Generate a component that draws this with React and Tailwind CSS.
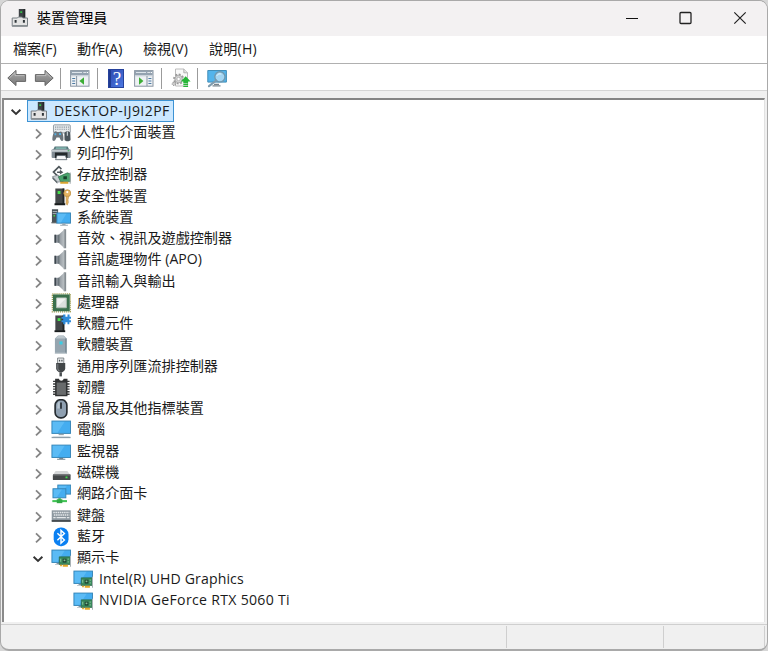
import React from 'react';

const Arrow = ({ flip }) => (
  <svg width="20" height="18" viewBox="0 0 20 18" className={flip ? '-scale-x-100' : ''}>
    <defs>
      <linearGradient id="arrow" x1="0" y1="0" x2="0" y2="1">
        <stop offset="0" stopColor="#aaa" />
        <stop offset="1" stopColor="#777" />
      </linearGradient>
    </defs>
    <path d="M.8 9 9 1.4V5.6h9.6v6.8H9v4.2z" fill="url(#arrow)" stroke="#666" strokeWidth="1" strokeLinejoin="round" />
    <path d="M2.6 8.8 8 3.7v2.9h9.4" fill="none" stroke="#c4c4c4" strokeWidth=".8" />
  </svg>
);

const PanelIcon = ({ right }) => (
  <svg width="20" height="17" viewBox="0 0 20 17">
    <rect x=".6" y=".6" width="18.4" height="15.6" fill="#eef1f4" stroke="#8995a2" />
    <rect x="1" y="1" width="17.6" height="4.2" fill="#94a2b0" />
    <path d="M2 2.5h10" stroke="#dde4ea" strokeWidth="1" />
    <path d="M13.5 2.5h1.2M15.3 2.5h1M17 2.5h1" stroke="#fff" strokeWidth="1.2" />
    <path d="M1 5.8h17.6" stroke="#c3ccd5" strokeWidth="1" />
    {right ? (
      <>
        <path d="M13 6v10" stroke="#8995a2" />
        <path d="M14.4 8.5h3M14.4 11h3M14.4 13.5h3" stroke="#4d7ba3" strokeWidth="1.2" />
        <path d="M5 7.2v7.6L9.4 11z" fill="#3cae35" />
      </>
    ) : (
      <>
        <path d="M6.6 6v10" stroke="#8995a2" />
        <path d="M2.2 8.5h3M2.2 11h3M2.2 13.5h3" stroke="#4d7ba3" strokeWidth="1.2" />
        <path d="M14 7.2v7.6L9.4 11z" fill="#3cae35" />
      </>
    )}
  </svg>
);

const HelpIcon = () => (
  <span className="relative flex h-[19px] w-4 items-center justify-center border border-[#26429c] bg-linear-to-br from-[#2c48ae] to-[#4d78e2] pl-[2px] font-['Liberation_Serif',serif] text-[19px] leading-none text-white">
    <span className="absolute inset-y-0 left-0 w-[2px] bg-[#203a91]" />?
  </span>
);

const ScanIcon = () => (
  <svg width="20" height="20" viewBox="0 0 20 20">
    <path d="M4.5 1h8.3L16.5 4.6V18H4.5z" fill="#fafafa" stroke="#bcbcbc" />
    <path d="M12.8 1v3.8h3.7" fill="#e4e4e4" stroke="#a5a5a5" strokeWidth=".8" />
    <circle cx="7.6" cy="11" r="4.4" fill="#dedede" stroke="#999" strokeWidth="2.2" strokeDasharray="1.8 1.6" />
    <circle cx="7.6" cy="11" r="3.7" fill="#d6d6d6" stroke="#a2a2a2" strokeWidth=".8" />
    <circle cx="7.6" cy="11" r="1.7" fill="#fff" stroke="#999" strokeWidth=".6" />
    <circle cx="2.9" cy="15.8" r="1.7" fill="#ccc" stroke="#999" strokeWidth="1.1" strokeDasharray="1.1 .9" />
    <path d="M14.7 8.3l4.9 5.1h-2.5v2h-4.8v-2H9.8zM12.3 16h4.8v1.1h-4.8zM12.3 17.8h4.8V19h-4.8z" fill="#25b637" />
  </svg>
);

const MonitorScanIcon = () => (
  <svg width="21" height="19" viewBox="0 0 21 19">
    <path d="M.8 1.5h18.6v11.6H.8z" fill="#53b4eb" stroke="#428eb8" />
    <path d="M7 15.3h5M5.5 16.8h8" stroke="#77848c" strokeWidth="1.2" />
    <circle cx="12.9" cy="7.8" r="5.1" fill="#a3d5f2" stroke="#7098af" strokeWidth="1.4" />
    <path d="M9.8 6.8c1-2 3-2.4 4.5-1.6" stroke="#e6f5fc" fill="none" />
    <path d="M9.2 11.5 2 17.2" stroke="#7f9cae" strokeWidth="2.2" strokeLinecap="round" />
  </svg>
);

// small server on top of a device box, used in the title and on the root node
const PcIcon = () => (
  <svg width="18" height="20" viewBox="0 0 18 20">
    <path d="M7.8 1h6.4v10H7.8z" fill="#3d4245" />
    <path d="M12.5 1h1.7v10h-1.7z" fill="#24282a" />
    <path d="M9.3 3.3h1.8v1.6H9.3z" fill="#35c449" />
    <path d="M1.2 10h5.2l1-1h3.4l1 1h4.7v8.2H1.2z" fill="#e4e4e4" stroke="#777f84" strokeWidth="1" />
    <path d="M1.2 17h15.3v1.4H1.2z" fill="#8a9094" />
    <path d="M3.6 12h2v2.7h-2zM11.9 12h2v2.7h-2z" fill="#30363a" />
  </svg>
);

const Screen = ({ x, y, w, h }) => (
  <>
    <rect x={x} y={y} width={w} height={h} fill="#44adf0" stroke="#3584b5" strokeWidth=".9" />
    <path d={`M${x + 0.7} ${y + 0.7}h${w * 0.65}L${x + w * 0.3} ${y + h - 0.7}H${x + 0.7}z`} fill="#78cbfa" opacity=".45" />
  </>
);

const ServerBody = () => (
  <>
    <path d="M4.8 1.6h8.7v15H4.8z" fill="#434749" />
    <path d="M11.8 1.6h1.7v15h-1.7z" fill="#222627" />
    <path d="M4 16h10.4v1.8H4z" fill="#191c1d" />
    <path d="M7 4.2h2.8V7H7z" fill="#46df4b" />
  </>
);

const Board = () => (
  <>
    <path d="M8.6 8.8h10.8v7.4H8.6z" fill="#3b8a5c" stroke="#225f3e" strokeWidth=".6" />
    <path d="M12 10.6h3.5v3.6H12z" fill="#173a2b" />
    <path d="M12.8 11.4h1.8V13h-1.8zM9.5 10.6h1v3h-1zM16.7 10.5h1.2v1.2h-1.2zM16.7 13h1.2v1.2h-1.2z" fill="#83c297" />
    <path d="M9.4 16.4h1.8v1.6H9.4zM12 16.4h5v1.9h-5z" fill="#e5a928" />
    <path d="M19.5 7.8v10.5" stroke="#a9b2b5" strokeWidth="1" />
  </>
);

const glyphs = {
  hid: (
    <>
      <rect x="3" y="2" width="16.3" height="7.8" rx=".8" fill="#e7eaec" stroke="#8d979f" strokeWidth=".9" />
      <path d="M4.5 4.2h13.5M4.5 6.3h13.5" stroke="#8d979f" strokeWidth="1.1" strokeDasharray="1.2 .9" />
      <path d="M3.6 9c1-1 2.3-.8 3 0h2c.9-.8 2.2-.8 2.8.2 1 2.2 1.5 5.1 1.2 7.1-.4 1.9-2 1.9-2.8.1l-1-2.2H6l-1.2 2.4c-.8 1.5-2.7 1.5-2.9-.3-.1-2.1.6-5.1 1.7-7.3z" fill="#6c757c" />
      <path d="M4 10.2h1.7v2H4zM8.4 9.8h1.9v2H8.4z" fill="#57b0e0" />
      <path d="M13.6 9.8c1.2-2.2 5-2.2 5.7 0l.3 6.6c-.4 1.9-5.4 1.9-5.9 0z" fill="#4b555c" />
      <path d="M16.5 8.4v4.2" stroke="#c2cace" strokeWidth="1.2" />
    </>
  ),
  printer: (
    <>
      <path d="M4.2 2.6h12.6l1.6 3.3H2.6z" fill="#55767a" />
      <path d="M5.4 3.4h10.2v1.8H5z" fill="#7fb0ab" />
      <rect x="1.2" y="5.2" width="18.5" height="8.6" rx="1.1" fill="#808c94" />
      <path d="M1.5 5.8h17.9v2H1.5z" fill="#c3cbd0" />
      <path d="M16.8 6.2h1.6v1.1h-1.6z" fill="#3aa853" />
      <path d="M4.4 8.4h12.2v5.4H4.4z" fill="#22282b" />
      <path d="M6.4 11.4h8.2l1.4 4H5z" fill="#f5f7f8" stroke="#59646b" strokeWidth=".8" />
    </>
  ),
  storage: (
    <>
      <path d="M10.7 4.1 8.3 1.9 3 7.1l5.5 5.2" fill="none" stroke="#4f575b" strokeWidth="1.6" />
      <path d="M6.5 7.2h3.6" stroke="#4f575b" strokeWidth="1.5" />
      <path d="m9.2 4.9 3.4 2.3-3.4 2.3z" fill="#4f575b" />
      <path d="m2 11.5 5.4-1.5 5 6.2-5.6.6z" fill="#c8ced1" stroke="#727b80" strokeWidth=".7" />
      <path d="m2 11.8 4.8 5v1.7L2 13.5z" fill="#505b60" />
      <path d="m7.7 11.6 8.8-3.8 2.7 1v7.5H9.8z" fill="#4aa26c" stroke="#236440" strokeWidth=".6" />
      <path d="M12.6 11.2h3.4v2.8h-3.4z" fill="#17432b" />
      <path d="M9.6 16.5h7.8v1.9H9.6z" fill="#d9a42f" />
      <path d="M19.2 7.5v10.8" stroke="#9fa8ac" />
    </>
  ),
  security: (
    <>
      <ServerBody />
      <circle cx="16.4" cy="6.2" r="3.4" fill="#e5b565" stroke="#b98a3c" strokeWidth=".7" />
      <circle cx="16.4" cy="5.1" r="1.1" fill="#fff" />
      <path d="M15.2 9.2h2.4v2l-.7.8.7.8-.7.9.7.9-1.2 3.2-1.2-1.3z" fill="#e5b565" stroke="#b98a3c" strokeWidth=".5" />
    </>
  ),
  system: (
    <>
      <path d="M1.5 1.3h6v12.6h-6z" fill="#4a5358" />
      <path d="M2.2 3.6h4.5M2.2 5.6h4.5" stroke="#a9b4ba" strokeWidth=".9" />
      <path d="M3 7h1.5v1.4H3z" fill="#45d44b" />
      <path d="M1 14h5.5v1H1z" fill="#2f3639" />
      <Screen x={6.3} y={5} w={13.2} h={9.9} />
      <path d="M11.5 15.2h3.2v1.5h-3.2zM9.5 16.4H17v.9H9.5z" fill="#9aa8b1" />
    </>
  ),
  speaker: (
    <>
      <path d="M4 5.8h5v7.8H4z" fill="#858d94" />
      <path d="M4 5.8h1.5v7.8H4z" fill="#3d464d" />
      <path d="M8 5.8 13.6.6v18.2L8 13.6z" fill="url(#cone)" />
      <path d="M8.2 5.8v7.8" stroke="#5a636a" strokeWidth=".8" />
      <path d="M13 .5h2.3v18.4H13z" fill="#868d92" />
      <path d="M13.2 1v17.5" stroke="#c6cbce" strokeWidth=".6" />
    </>
  ),
  cpu: (
    <>
      <rect x="1.9" y="1" width="17.5" height="17.5" fill="none" stroke="#9b9a4e" strokeWidth="1.2" strokeDasharray="1.1 .9" />
      <path d="M2.5 1.6h16.3v16.3H2.5z" fill="#3a704d" />
      <path d="M6 5h9.5v9.5H6z" fill="#dce0de" stroke="#b2bfb5" strokeWidth=".9" />
      <path d="M6.6 5.6h8.3l-8.3 8.3z" fill="#f0f2f1" />
    </>
  ),
  component: (
    <>
      <ServerBody />
      <path d="M12.4.6h2.2v2.2h2V.6h2v2.2H20v1.9h-1.6v1.6H20v2h-1.6v1.9h-1.8V8.3h-2v1.9h-2.2V8.3h-1.6v-2h1.6V4.7h-1.6V2.8h1.6z" fill="#2f8bd8" />
    </>
  ),
  software: (
    <>
      <path d="M4.4 3.5 7.5.8h5.4l2.9 2.7v14.9H4.4z" fill="#96a5af" />
      <path d="M4.8 3.6 7.5 1.2h5.2l2.7 2.4z" fill="#bcc7cd" />
      <path d="M14.2 3.6h1.6v14.8h-1.6z" fill="#7d8d97" />
      <path d="M8.8 6.4h3v3h-3z" fill="#39cde4" />
      <path d="M4.4 17.4h11.4v1.2H4.4z" fill="#c3ccd1" />
    </>
  ),
  usb: (
    <>
      <path d="M7 1.2h6v5.2H7z" fill="#eceeef" stroke="#6b7276" strokeWidth=".8" />
      <path d="M8.3 2.8h1.2v1.8H8.3zM10.6 2.8h1.2v1.8h-1.2z" fill="#474d50" />
      <path d="M5.6 6h8.8v5.2c0 2-1.6 3.2-2.8 3.8H8.4c-1.2-.6-2.8-1.8-2.8-3.8z" fill="#424648" />
      <path d="M7.2 7v4.7c.2 1 1 1.7 1.6 2.1" stroke="#787e81" fill="none" />
      <path d="M10 15v4" stroke="#484d50" strokeWidth="2.4" />
    </>
  ),
  firmware: (
    <>
      <path d="M2.6 3.5h3M2.6 6h3M2.6 8.5h3M2.6 11h3M2.6 13.5h3M2.6 16h3M15 3.5h3.6M15 6h3.6M15 8.5h3.6M15 11h3.6M15 13.5h3.6M15 16h3.6" stroke="#3a3c3d" strokeWidth="1.3" />
      <path d="M4.6 1h3.7c.4 2.4 4.2 2.4 4.6 0h3.7v17H4.6z" fill="#303233" />
      <path d="M6.1 4.6h9v12h-9z" fill="#686b6c" />
    </>
  ),
  mouse: (
    <>
      <rect x="4.6" y=".9" width="11.4" height="17.6" rx="5.3" fill="#8fa0b1" stroke="#252b30" strokeWidth="1.6" />
      <path d="M7 4.5c.7-1.4 1.3-1.8 2-2v7H6.6z" fill="#b8c5d1" />
      <path d="M10.3 3.6v6" stroke="#2e363d" strokeWidth="1.8" />
    </>
  ),
  computer: (
    <>
      <Screen x={1.5} y={1.2} w={18} h={12} />
      <path d="M8 13.6h5v1.3H8z" fill="#96a5ae" />
      <path d="M1.2 16.5h18.4v1.3H1.2z" fill="#8d9ea9" />
      <path d="M2.6 15.8h15.8v.8H2.6z" fill="#d2dae0" />
    </>
  ),
  monitor: (
    <>
      <Screen x={1.5} y={3.2} w={18} h={12} />
      <path d="M8.6 15.6h3.8v1H8.6zM6.5 16.4h8v.9h-8z" fill="#738590" />
    </>
  ),
  disk: (
    <>
      <path d="M5 8h11.4l3.2 4H2.4z" fill="#d5d7d8" />
      <rect x="2.4" y="11.2" width="17.2" height="5.6" rx=".7" fill="#444849" />
      <path d="M2.6 11.8h16.8" stroke="#85898b" strokeWidth=".8" />
      <path d="M14.7 13.3h1.9V15h-1.9z" fill="#3ee04b" />
    </>
  ),
  network: (
    <>
      <Screen x={7.2} y={1.2} w={12.5} h={8.8} />
      <Screen x={2.5} y={4.8} w={12.5} h={8.8} />
      <path d="M7.7 14h2.4v2.4H7.7z" fill="#36ab45" />
      <path d="M1.9 15.8h14.2v2H1.9z" fill="#41c355" />
      <path d="M6.2 15h5.4v3.8H6.2z" fill="#31a944" />
    </>
  ),
  keyboard: (
    <>
      <path d="M1.3 4.4h18.4v10.8H1.3z" fill="#8c979f" />
      <path d="M1.3 13.8h18.4v1.8H1.3z" fill="#464d52" />
      <path d="M2.8 6.5h15.6M3.4 8.9h15" stroke="#e3e7ea" strokeWidth="1.3" strokeDasharray="1.5 .6" />
      <path d="M2.8 11.4h2.3M6 11.4h9M16 11.4h2.4" stroke="#e3e7ea" strokeWidth="1.3" />
    </>
  ),
  bluetooth: (
    <>
      <rect x="3.2" y=".6" width="14.4" height="18.2" rx="6.8" fill="#0b80f2" />
      <path d="m6.8 6.3 6.8 6.5-3.3 3.1V3.5l3.3 3.1-6.8 6.5" fill="none" stroke="#fff" strokeWidth="1.4" />
    </>
  ),
  display: (
    <>
      <Screen x={1.5} y={2.2} w={18} h={12} />
      <path d="M6 14.7h3v1.6H4.5v-.7H6z" fill="#8495a0" />
      <Board />
    </>
  ),
};

const DeviceIcon = ({ name }) => (
  <svg width="20" height="20" viewBox=".6 .2 19.4 19.4" className="mt-px shrink-0">
    <defs>
      <linearGradient id="cone">
        <stop offset="0" stopColor="#8b9399" />
        <stop offset="1" stopColor="#c0c5c9" />
      </linearGradient>
    </defs>
    {glyphs[name]}
  </svg>
);

const Chevron = ({ open }) =>
  open ? (
    <svg width="12" height="12" viewBox="0 0 12 12" className="mt-[2px] shrink-0">
      <path d="m1.6 3.7 4.4 4.3 4.4-4.3" fill="none" stroke="#333" strokeWidth="1.9" />
    </svg>
  ) : (
    <svg width="12" height="12" viewBox="0 0 12 12" className="mt-[3px] shrink-0">
      <path d="m4 1.4 4.7 4.5L4 10.4" fill="none" stroke="#858585" strokeWidth="1.8" />
    </svg>
  );

const devices = [
  ['hid', '人性化介面裝置'],
  ['printer', '列印佇列'],
  ['storage', '存放控制器'],
  ['security', '安全性裝置'],
  ['system', '系統裝置'],
  ['speaker', '音效、視訊及遊戲控制器'],
  ['speaker', '音訊處理物件 (APO)'],
  ['speaker', '音訊輸入與輸出'],
  ['cpu', '處理器'],
  ['component', '軟體元件'],
  ['software', '軟體裝置'],
  ['usb', '通用序列匯流排控制器'],
  ['firmware', '韌體'],
  ['mouse', '滑鼠及其他指標裝置'],
  ['computer', '電腦'],
  ['monitor', '監視器'],
  ['disk', '磁碟機'],
  ['network', '網路介面卡'],
  ['keyboard', '鍵盤'],
  ['bluetooth', '藍牙'],
  ['display', '顯示卡'],
];

const adapters = [
  ['Intel(R) UHD Graphics', 'tracking-[0.11px]'],
  ['NVIDIA GeForce RTX 5060 Ti', 'tracking-[0.3px]'],
];

const Separator = () => <span className="h-[21px] w-px bg-[#9b9b9b]" />;

export default function App() {
  return (
    <div className="h-[651px] w-[768px] overflow-hidden bg-[#d6d6d6] font-['Open_Sans','Noto_Sans_CJK_TC',sans-serif] text-[14.1px] text-[#1a1a1a]">
      <div className="flex h-[651px] flex-col overflow-hidden rounded-[9px] border border-b-2 border-[#a9a9a9] bg-[#f0f0f0]">
        <header className="flex h-[35px] shrink-0 items-center bg-[#f3f1f2] pb-[2px] pl-[10px]">
          <PcIcon />
          <h1 className="ml-2 text-[14.1px] leading-5 text-black">裝置管理員</h1>
          <div className="ml-auto flex items-center gap-[40px] pr-[20px]">
            <svg width="14" height="14" viewBox="0 0 14 14"><path d="M1 7.5h12" stroke="#111" strokeWidth="1.2" /></svg>
            <svg width="14" height="14" viewBox="0 0 14 14"><rect x="1" y="1.5" width="11" height="11" rx="1" fill="none" stroke="#222" strokeWidth="1.3" /></svg>
            <svg width="14" height="14" viewBox="0 0 14 14"><path d="m1.3 1.3 11.4 11.4M12.7 1.3 1.3 12.7" stroke="#222" strokeWidth="1.2" /></svg>
          </div>
        </header>

        <nav className="flex h-[27px] shrink-0 items-center bg-white pb-[2px] pl-3 text-[14.1px] leading-5">
          <span className="w-[64px]">檔案(F)</span>
          <span className="w-[66px]">動作(A)</span>
          <span className="w-[66px]">檢視(V)</span>
          <span className="tracking-[0.2px]">說明(H)</span>
        </nav>

        <div className="flex h-[28px] shrink-0 items-center border-y border-t-[#b0b0b0] border-b-[#d5d5d5] bg-white pt-[2px] pl-[6px]">
          <Arrow />
          <span className="w-[7px]" />
          <Arrow flip />
          <span className="w-[6px]" />
          <Separator />
          <span className="w-[9px]" />
          <PanelIcon />
          <span className="w-[7px]" />
          <Separator />
          <span className="w-[10px]" />
          <HelpIcon />
          <span className="w-[10px]" />
          <PanelIcon right />
          <span className="w-[7px]" />
          <Separator />
          <span className="w-[9px]" />
          <ScanIcon />
          <span className="w-[6px]" />
          <Separator />
          <span className="w-[9px]" />
          <MonitorScanIcon />
        </div>

        <main className="mt-[7px] mr-[2px] ml-[1px] flex h-[524px] shrink-0 flex-col border-t-2 border-r border-l-2 border-t-[#858585] border-r-[#e2e2e2] border-l-[#8b8b8b] bg-white">
          <div className="flex h-[21.6px] shrink-0 items-center pl-[6px]">
            <Chevron open />
            <div className="ml-[5px] flex h-[22px] items-center border border-[#3d93d4] bg-[#cce8ff] pr-[3px] pl-[2px]">
              <PcIcon />
              <span className="ml-[6px] text-[14px] leading-5 tracking-[0.45px] whitespace-nowrap">DESKTOP-IJ9I2PF</span>
            </div>
          </div>
          {devices.map(([icon, label]) => (
            <div key={label} className="flex h-[21.28px] shrink-0 items-center pl-[28px]">
              <Chevron open={icon === 'display'} />
              <span className="w-[7px]" />
              <DeviceIcon name={icon} />
              <span className="ml-[6px] pb-px leading-5 whitespace-nowrap">{label}</span>
            </div>
          ))}
          {adapters.map(([label, tracking]) => (
            <div key={label} className="flex h-[21.28px] shrink-0 items-center pl-[69px]">
              <DeviceIcon name="display" />
              <span className={`ml-[6px] leading-5 whitespace-nowrap ${tracking}`}>{label}</span>
            </div>
          ))}
        </main>

        <footer className="mt-[2px] flex grow border-t border-[#cfcfcf] py-px">
          <span className="w-[506px] border-r border-[#cfcfcf]" />
          <span className="w-[157px] border-r border-[#cfcfcf]" />
          <span className="w-[101px] border-r border-[#cfcfcf]" />
        </footer>
      </div>
    </div>
  );
}
